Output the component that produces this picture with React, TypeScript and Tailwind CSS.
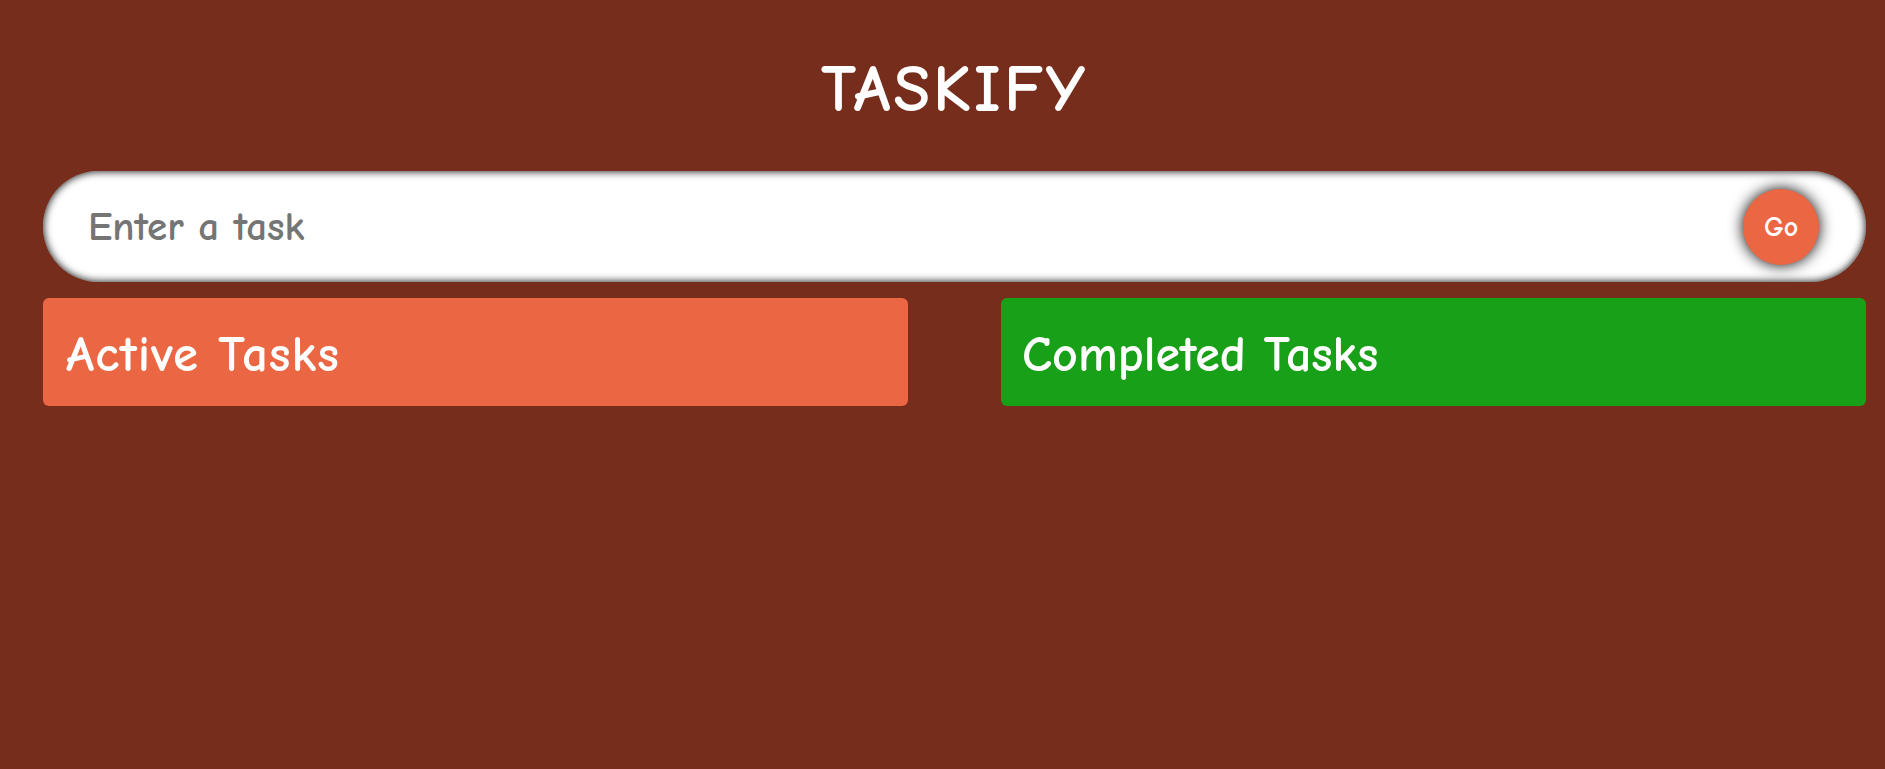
export default function App() {
  const font = { fontFamily: '"Comic Sans MS", "Comic Neue", "Noto Sans", sans-serif' };
  return (
    <div className="min-h-[769px] w-full bg-[#772d1c] flex flex-col pl-[43px] pr-[19px]" style={font}>
      <h1 className="text-white text-[67px] font-bold leading-none text-center mt-[56px] h-[72px] tracking-[3px]">TASKIFY</h1>
      <form className="relative flex items-center mt-[43px]" onSubmit={(e) => e.preventDefault()}>
        <input
          type="text"
          placeholder="Enter a task"
          className="w-full h-[111px] rounded-full bg-white px-[45px] text-[41px] font-bold text-black placeholder:text-[#757575] outline-none shadow-[inset_0_0_8px_black]"
          style={font}
        />
        <button
          type="submit"
          className="absolute right-[47px] w-[76px] h-[76px] rounded-full bg-[#eb6642] text-white text-[28px] font-bold shadow-[0_0_15px_black]"
          style={font}
        >
          Go
        </button>
      </form>
      <div className="flex justify-between mt-[16px]">
        <div className="w-[865px] h-[108px] rounded-[6px] bg-[#eb6642] flex items-center px-[23px] pt-[6px]">
          <span className="text-white text-[51px] font-bold tracking-[1px]">Active Tasks</span>
        </div>
        <div className="w-[865px] h-[108px] rounded-[6px] bg-[#18a018] flex items-center px-[21px] pt-[6px]">
          <span className="text-white text-[50px] font-bold">Completed Tasks</span>
        </div>
      </div>
    </div>
  );
}
